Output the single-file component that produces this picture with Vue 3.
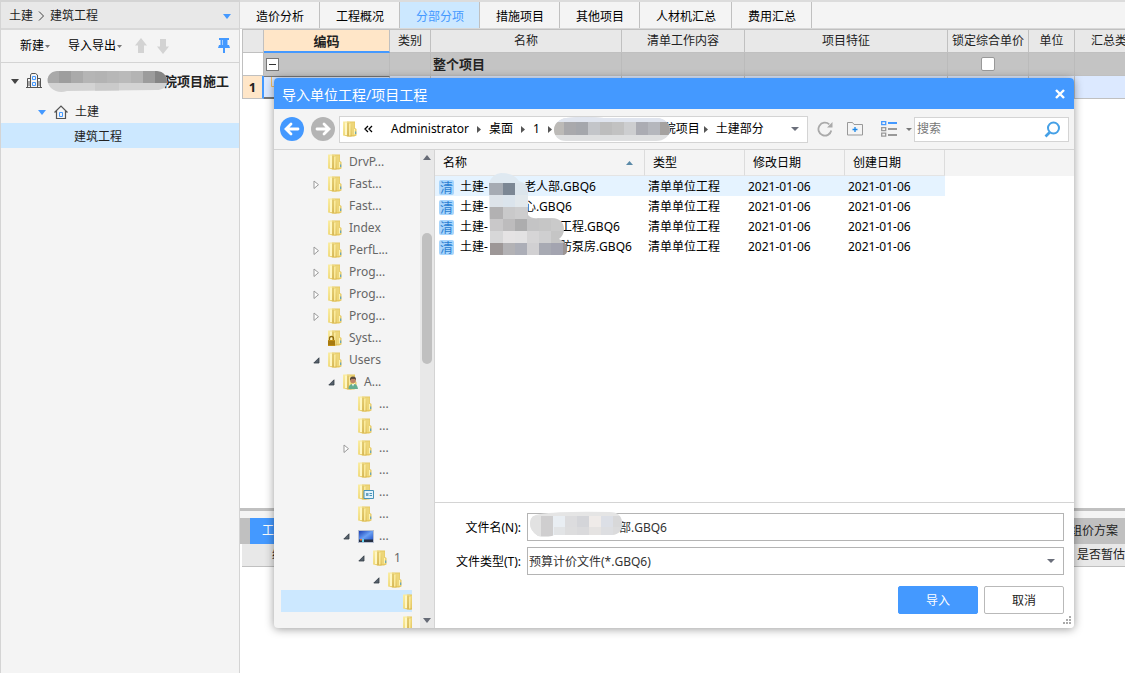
<script setup>
import { ref } from 'vue'

const tabs = ['造价分析', '工程概况', '分部分项', '措施项目', '其他项目', '人材机汇总', '费用汇总']
const activeTab = ref('分部分项')
const columns = ['类别', '名称', '清单工作内容', '项目特征', '锁定综合单价', '单位', '汇总类别']

const folders = [
  { level: 0, label: 'DrvP...' },
  { level: 0, label: 'Fast...', arrow: 'closed' },
  { level: 0, label: 'Fast...' },
  { level: 0, label: 'Index' },
  { level: 0, label: 'PerfL...', arrow: 'closed' },
  { level: 0, label: 'Prog...', arrow: 'closed' },
  { level: 0, label: 'Prog...', arrow: 'closed' },
  { level: 0, label: 'Prog...', arrow: 'closed' },
  { level: 0, label: 'Syst...', badge: 'lock' },
  { level: 0, label: 'Users', arrow: 'open' },
  { level: 1, label: 'A...', arrow: 'open', badge: 'user' },
  { level: 2, label: '...' },
  { level: 2, label: '...' },
  { level: 2, label: '...', arrow: 'closed' },
  { level: 2, label: '...' },
  { level: 2, label: '...', badge: 'card' },
  { level: 2, label: '...' },
  { level: 2, label: '...', arrow: 'open', badge: 'desktop' },
  { level: 3, label: '1', arrow: 'open' },
  { level: 4, label: '', arrow: 'open' },
  { level: 5, label: '', selected: true },
  { level: 5, label: '' }
]

const files = [
  { hidden: 3, tail: '老人部.GBQ6', selected: true },
  { hidden: 3, tail: '心.GBQ6' },
  { hidden: 6, tail: '工程.GBQ6' },
  { hidden: 6, tail: '防泵房.GBQ6' }
]

const fileName = ref('部.GBQ6')
const fileType = ref('gbq6')
const keyword = ref('')

const projectMask = ['#a9a9a9', '#9e9e9e', '#aaaaaa', '#b5b5b5', '#b3b3b3', '#b7b7b7', '#bababa', '#b4b4b4', '#9c9c9c', '#858585']
const pathMask = ['#bcbab7', '#a9a9ac', '#a5a7ac', '#c3c5c9', '#bdbdbd', '#c2c2c2', '#cdced0', '#abacb3', '#b5b7bd', '#a5a2a0']
const nameMask = ['#e2e2e2', '#cfcecf', '#e9eef3', '#dcdcde', '#d4d5d9', '#efebe9', '#dcdfe6', '#d8d8d9']
const listMask = [
  ['#dfe9f1', '#dfe9f1', '#dfe9f1', '#dfe9f1', '#dfe9f1', '#dfe9f1', '#dfe9f1'],
  ['#a6abb3', '#7c8794', '#dce5ec', '#dce5ec', '#dce5ec', '#dce5ec', '#dce5ec'],
  ['#dde3e9', '#dbe4ec', '#e2e8ec', '#e2e8ec', '#dcdcdc', '#dcdcdc', '#dcdcdc'],
  ['#b2b1b2', '#c9c9ca', '#cdcdce', '#c9c9ca', '#cccccc', '#cccccc', '#cccccc'],
  ['#c9c8c9', '#bdbcbd', '#adadae', '#c4c4c5', '#c6c6c6', '#cacaca', '#cccccc'],
  ['#d7d7d8', '#e5e3e4', '#e3e2e3', '#d6d5d6', '#cfcfd0', '#c5c5c5', '#c2c2c2'],
  ['#9d9797', '#b3b2b5', '#acaeb7', '#d1d0d2', '#a8aab3', '#a3a4b0', '#9a9493']
]
</script>

<template>
  <div class="app">
    <svg class="defs" width="0" height="0" aria-hidden="true">
      <defs>
        <linearGradient id="gold" x1="0" x2="1" y1="0" y2="1">
          <stop offset="0" stop-color="#fbeea6" /><stop offset="0.5" stop-color="#f1dc80" /><stop offset="1" stop-color="#d9b64c" />
        </linearGradient>
        <linearGradient id="screen" x1="0" x2="1" y1="0" y2="1">
          <stop offset="0" stop-color="#1b3fb4" /><stop offset="0.5" stop-color="#6aa0f4" /><stop offset="1" stop-color="#1d4ec6" />
        </linearGradient>
        <symbol id="folder" viewBox="0 0 14 16">
          <path d="M4 .500h8V7l1.500 1v6.500L11 15.500H4z" fill="#e6c860" />
          <path d="M8 1.500h3.500v12.500H8z" fill="#edd67a" />
          <path d="M0 .500h5l3.500 1.500v13.500H5L0 14.500z" fill="url(#gold)" />
          <path d="M2 1.500h2v12.500H2z" fill="#fff7c4" />
          <path d="M5 1.500v13.500" stroke="#c8a647" stroke-width=".8" />
          <path d="M6 3h1.500v11.500H6z" fill="#fbeb9e" />
          <path d="M11 8h1.200v5.500H11z" fill="#fdf3b4" /><path d="M12.200 10.500h1V13h-1z" fill="#4d9cc8" />
        </symbol>
      </defs>
    </svg>

    <aside class="sidebar">
      <nav class="crumbs" aria-label="位置">
        <span>土建</span>
        <svg width="7" height="12" viewBox="0 0 7 12"><path d="M1 1.500 5.500 6 1 10.500" fill="none" stroke="#444" /></svg>
        <span>建筑工程</span>
        <button class="plain end" aria-label="展开位置"><svg width="8" height="5"><path d="M0 0h8L4 5z" fill="#49f" /></svg></button>
      </nav>
      <div class="tools">
        <button class="plain">新建<svg width="5" height="3"><path d="M0 0h5L2.500 3z" fill="#777" /></svg></button>
        <button class="plain gap-l">导入导出<svg width="5" height="3"><path d="M0 0h5L2.500 3z" fill="#777" /></svg></button>
        <button class="plain gap-m" aria-label="上移"><svg width="12" height="16"><path d="M6 0l6 7.500H9V15H3V7.500H0z" fill="#d3d3d3" /></svg></button>
        <button class="plain gap-s" aria-label="下移"><svg width="12" height="16"><path d="M6 16l6-7.500H9V1H3v7.500H0z" fill="#d3d3d3" /></svg></button>
        <button class="plain end" aria-label="固定"><svg width="12" height="16"><path d="M1 0h10v2H9.500v5H11l1 3H7v5H5v-5H0l1-3h1.500V2H1z" fill="#49f" /><path d="M4 2h1v5H4z" fill="#a7cfff" /></svg></button>
      </div>
      <ul class="project">
        <li class="root">
          <svg class="caret" width="8" height="5"><path d="M0 0h8L4 5z" fill="#444" /></svg>
          <svg class="building" width="16" height="16" fill="none" stroke="#555"><path d="M0 14.500h16M1.500 14.500v-9h3M4.500 14.500V2l1-1.500h4L11.500 2v12.500M11.500 5.500h3v9M3 8v5M13 8v5" /><path d="M6.500 3.500h3v3h-3zM6.500 9.500h3v3h-3z" stroke="#49f" /></svg>
          <svg class="mask" width="120" height="24">
            <clipPath id="maskA"><path d="M10 2h100q10 1 10 11c0 6-6 8-10 8L20 22q-9 3-16-3c-6-6-4-16 6-17z" /></clipPath>
            <g clip-path="url(#maskA)">
              <rect width="120" height="24" fill="#d3d3d3" /><rect x="48" y="14" width="24" height="10" fill="#cacaca" />
              <rect v-for="(c, i) in projectMask" :key="i" :x="i * 12" y="2" width="12" height="12" :fill="c" />
            </g>
          </svg>
          <b>院项目施工</b>
        </li>
        <li class="branch">
          <svg class="caret" width="8" height="5"><path d="M0 0h8L4 5z" fill="#49f" /></svg>
          <svg class="house" width="14" height="14" fill="none" stroke="#555"><path d="M.5 7.500 7 1l6.500 6.500M2.500 6v7.500h9V6" stroke-width="1.200" /><path d="M5.500 7.500h3v4h-3z" stroke="#49f" /></svg>
          <span>土建</span>
        </li>
        <li class="leaf">建筑工程</li>
      </ul>
    </aside>

    <main class="main">
      <nav class="tabs" aria-label="页签">
        <button v-for="t in tabs" :key="t" :class="{ active: t === activeTab }" @click="activeTab = t">{{ t }}</button>
      </nav>
      <div class="sheet">
        <table class="grid">
          <colgroup><col class="c-no"><col class="c-code"><col class="c-kind"><col class="c-name"><col class="c-work"><col><col class="c-lock"><col class="c-unit"><col class="c-sum"></colgroup>
          <thead>
            <tr><th></th><th class="code">编码</th><th v-for="c in columns" :key="c">{{ c }}</th></tr>
          </thead>
          <tbody>
            <tr class="total">
              <td class="blank"></td>
              <td class="fold"><button aria-label="折叠"></button></td><td></td><td><b>整个项目</b></td><td></td><td></td>
              <td class="center"><input type="checkbox" aria-label="锁定综合单价"></td><td></td><td></td>
            </tr>
            <tr class="current"><td class="no">1</td><td class="cell"><svg width="10" height="12"><path d="M7.500 0v9.500H10" fill="none" stroke="#f5c067" /></svg></td><td v-for="n in 7" :key="n"></td></tr>
          </tbody>
        </table>
      </div>
      <section class="detail">
        <div class="detail-tabs"><button class="on">工料机显示</button><button class="last">组价方案</button></div>
        <div class="detail-head"><span>编码</span><span>是否暂估</span></div>
      </section>
    </main>

    <section class="dialog" role="dialog" aria-labelledby="dlg-title">
      <header class="title">
        <h1 id="dlg-title">导入单位工程/项目工程</h1>
        <button class="plain" aria-label="关闭"><svg width="10" height="10"><path d="M1 1l8 8M9 1 1 9" stroke="#fff" stroke-width="2.400" /></svg></button>
      </header>
      <div class="bar">
        <button class="plain" aria-label="后退"><svg width="24" height="24" fill="none" stroke="#fff" stroke-width="2.800"><circle cx="12" cy="12" r="12" fill="#49f" stroke="none" /><path d="M18 12H6.500M11 7l-5 5 5 5" stroke-linecap="round" /></svg></button>
        <button class="plain forward" aria-label="前进"><svg width="24" height="24" fill="none" stroke="#fff" stroke-width="2.800"><circle cx="12" cy="12" r="12" fill="#b4b4b4" stroke="none" /><path d="M6 12h11.500M13 7l5 5-5 5" stroke-linecap="round" /></svg></button>
        <div class="path">
          <svg width="14" height="16"><use href="#folder" /></svg>
          <button class="plain more" aria-label="上级目录"><svg width="9" height="8" fill="none" stroke="#000" stroke-width="1.300"><path d="M4 1 1 4l3 3M8 1 5 4l3 3" /></svg></button>
          <button class="plain">Administrator</button><svg class="sep" width="4" height="7"><path d="M0 0l4 3.500L0 7z" fill="#555" /></svg>
          <button class="plain">桌面</button><svg class="sep" width="4" height="7"><path d="M0 0l4 3.500L0 7z" fill="#555" /></svg>
          <button class="plain">1</button><svg class="sep" width="4" height="7"><path d="M0 0l4 3.500L0 7z" fill="#555" /></svg>
          <svg class="mask path-mask" width="116" height="26">
            <clipPath id="maskB"><path d="M12 1Q30-1 50 1h52c9 0 14 6 14 12s-6 11-14 11H14C5 25 0 19 0 13S5 2 12 1z" /></clipPath>
            <g clip-path="url(#maskB)">
              <rect width="116" height="26" fill="#dedfe0" /><rect width="116" height="6" fill="#e0e5ef" />
              <rect v-for="(c, i) in pathMask" :key="i" :x="i * 12 - 2" y="5" width="12" height="13" :fill="c" />
            </g>
          </svg>
          <button class="plain tail">院项目</button><svg class="sep close" width="4" height="7"><path d="M0 0l4 3.500L0 7z" fill="#555" /></svg>
          <button class="plain">土建部分</button>
          <button class="plain end" aria-label="历史路径"><svg width="8" height="4"><path d="M0 0h8L4 4z" fill="#6b6f7b" /></svg></button>
        </div>
        <button class="plain refresh" aria-label="刷新"><svg width="16" height="16"><path d="M14.300 9.500A6.500 6.500 0 1 1 12.300 3.300" fill="none" stroke="#aaa" stroke-width="1.800" /><path d="M15.500 1v5.500H10z" fill="#aaa" /></svg></button>
        <button class="plain new" aria-label="新建文件夹"><svg width="16" height="14" fill="none"><path d="M.5 13V.5h5l1.500 2h8.500v10.500H.5" stroke="#999" /><path d="M8 5v5M5.500 7.500h5" stroke="#1a86e8" stroke-width="1.300" /></svg></button>
        <button class="plain view" aria-label="视图"><svg width="17" height="16" fill="none"><path d="M.7.700h4v3h-4z" stroke="#49f" stroke-width="1.300" /><path d="M7 2h9" stroke="#49f" stroke-width="2" /><path d="M.7 6.700h4v3h-4zM.7 12.200h4v3h-4z" stroke="#999" stroke-width="1.300" /><path d="M7 8h9M7 14h9" stroke="#999" stroke-width="2" /></svg></button>
        <button class="plain view-more" aria-label="更多视图"><svg width="6" height="3"><path d="M0 0h6L3 3z" fill="#777" /></svg></button>
        <label class="search">
          <input v-model="keyword" type="text" placeholder="搜索" aria-label="搜索">
          <svg width="17" height="17" fill="none" stroke="#45a0e6"><circle cx="9.500" cy="7" r="5.500" stroke-width="2" /><path d="M5.500 11.500 1.500 15.500" stroke-width="2.600" /></svg>
        </label>
      </div>
      <div class="content">
        <div class="tree">
          <ul>
            <li v-for="(f, i) in folders" :key="i" :class="['lv' + f.level, { selected: f.selected }]">
              <span class="twist">
                <svg v-if="f.arrow === 'closed'" width="7" height="9"><path d="M1 1v7.500L5.500 4.700z" fill="#fff" stroke="#999" /></svg>
                <svg v-else-if="f.arrow === 'open'" width="7" height="7"><path d="M6 .8V6H.8z" fill="#56616c" stroke="#333c45" stroke-width=".8" /></svg>
              </span>
              <span class="icon">
                <svg v-if="f.badge === 'desktop'" width="16" height="13"><rect width="16" height="13" fill="#b7bfd0" /><rect x="1" y="1" width="14" height="10" fill="url(#screen)" /><path d="M1 9.500h14V12H1z" fill="#252f42" /><path d="M2 9h2v1.500H2z" fill="#e77039" /><path d="M4 9h2v3H4z" fill="#5fd1ef" /></svg>
                <svg v-else width="16" height="16">
                  <use href="#folder" width="14" height="16" />
                  <g v-if="f.badge === 'lock'"><path d="M1.500 10V8.500a2 2 0 0 1 4 0V10" fill="none" stroke="#8e6b10" stroke-width="1.300" /><path d="M0 10h7v6H0z" fill="#c38f13" /><path d="M0 12h7M0 14h7" stroke="#7c5a0c" stroke-width=".8" /></g>
                  <g v-if="f.badge === 'user'"><path d="M5.500 15q0-5 4.500-5t5 5z" fill="#65ad91" /><circle cx="10" cy="6.500" r="2.800" fill="#c08468" /><path d="M7 6.500q-.5-4 3-4t3 4L12 5H8.500z" fill="#5b4a3d" /><path d="M9 10h2l-1 2.500z" fill="#fff" /></g>
                  <g v-if="f.badge === 'card'"><path d="M6 6.500h9.500v8H6z" fill="#e3f3fc" stroke="#4893b8" /><path d="M8 9h2.500v3H8z" fill="#69a1bf" /><path d="M11.500 9.500H14M11.500 11.500H14" stroke="#4893b8" /></g>
                </svg>
              </span>
              <span>{{ f.label }}</span>
            </li>
          </ul>
        </div>
        <div class="scroll" aria-hidden="true">
          <svg width="8" height="5"><path d="M0 5h8L4 0z" fill="#666b76" /></svg>
          <span class="track"><i></i></span>
          <svg width="8" height="5"><path d="M0 0h8L4 5z" fill="#666b76" /></svg>
        </div>
        <div class="pane">
          <div class="list">
            <table>
              <colgroup><col class="f-name"><col class="f-col"><col class="f-col"><col class="f-col"><col></colgroup>
              <thead>
                <tr><th><span class="sorted">名称<svg width="7" height="4"><path d="M0 4h7L3.500 0z" fill="#5b8aa8" /></svg></span></th><th>类型</th><th>修改日期</th><th>创建日期</th><th></th></tr>
              </thead>
              <tbody>
                <tr v-for="(f, i) in files" :key="i" :class="{ selected: f.selected }">
                  <td><span class="file"><i>清</i>土建-<span :style="{ width: f.hidden * 12 + 'px' }"></span>{{ f.tail }}</span></td>
                  <td>清单单位工程</td><td>2021-01-06</td><td>2021-01-06</td><td></td>
                </tr>
              </tbody>
            </table>
            <svg class="mask list-mask" width="80" height="84">
              <clipPath id="maskC"><path d="M0 10Q3 1 12 0q13 0 18 8 9 2 9 10v24q4 4 10 3h14c8 0 12 5 12 11q0 6-5 10 6 3 8 7v6q-1 3-6 4H1V60z" /></clipPath>
              <g clip-path="url(#maskC)">
                <g v-for="(row, r) in listMask" :key="r"><rect v-for="(c, i) in row" :key="i" :x="i * 12 + (i ? 2 : 0)" :y="r * 12 - 2" :width="i ? 12 : 14" height="12" :fill="c" /></g>
              </g>
            </svg>
          </div>
          <form class="form" @submit.prevent>
            <label for="fname">文件名(N):</label>
            <div class="field">
              <input id="fname" v-model="fileName" type="text">
              <svg class="mask name-mask" width="92" height="26">
                <clipPath id="maskD"><path d="M10 3Q30 0 80 1q12 0 12 12 0 10-10 11H24q-8 4-16 1Q0 20 0 12T10 3z" /></clipPath>
                <g clip-path="url(#maskD)"><rect width="94" height="26" fill="#e5e5e5" /><rect v-for="(c, i) in nameMask" :key="i" :x="i * 12 - 1" y="5" width="12" height="20" :fill="c" /><path d="M24 16h70v9H24z" fill="#dedede" fill-opacity=".6" /></g>
              </svg>
            </div>
            <label for="ftype">文件类型(T):</label>
            <div class="field">
              <select id="ftype" v-model="fileType"><option value="gbq6">预算计价文件(*.GBQ6)</option></select>
              <svg class="drop" width="8" height="4"><path d="M0 0h8L4 4z" fill="#6b6f7b" /></svg>
            </div>
            <div class="actions"><button class="primary" type="submit">导入</button><button type="button">取消</button></div>
          </form>
          <svg class="grip" width="8" height="8" fill="#aaa" aria-hidden="true"><path d="M6 0h2v2H6zM3 3h2v2H3zM6 3h2v2H6zM0 6h2v2H0zM3 6h2v2H3zM6 6h2v2H6z" /></svg>
        </div>
      </div>
    </section>
  </div>
</template>

<style>
body { overflow: hidden; }
</style>

<style scoped>
.app { position: relative; display: flex; min-height: 100vh; overflow: hidden; background: #fff; color: #222; font: 12px/20px "Noto Sans", "Noto Sans CJK SC", sans-serif; }
.app * { box-sizing: border-box; }
.defs, .mask, .drop, .grip { position: absolute; }
svg { display: block; flex: none; }
button, input, select { margin: 0; font: inherit; color: inherit; }
button { padding: 0; border: 0; cursor: pointer; white-space: nowrap; }
ul { margin: 0; padding: 0; list-style: none; }
i { font-style: normal; }
.plain { display: flex; flex: none; align-items: center; background: none; }
.end { margin-left: auto; }

.sidebar { flex: none; width: 240px; background: #f4f4f4; border: solid #d4d4d4; border-width: 2px 1px 0; }
.crumbs { display: flex; align-items: center; gap: 5px; height: 28px; padding: 2px 8px 0; background: #e8e8e8; border-bottom: 2px solid #d8d8d8; }
.tools { display: flex; align-items: center; height: 33px; padding: 0 9px 0 19px; border-bottom: 1px solid #d4d4d4; color: #000; }
.tools svg { margin-left: 1px; }
.gap-l { margin-left: 18px; }
.gap-m { margin-left: 12px; }
.gap-s { margin-left: 9px; }
.project li { display: flex; align-items: center; height: 25px; padding-top: 2px; }
.project .root { position: relative; height: 36px; padding: 0 0 0 10px; }
.building { margin-left: 7px; }
.root b { margin-left: 122px; font-size: 13px; white-space: nowrap; }
.root .mask { left: 46px; top: 6px; }
.project .branch { height: 24px; padding-left: 37px; }
.house { margin: 0 7px 0 8px; }
.project .leaf { padding-left: 73px; background: #cce8ff; }

.main { display: flex; flex: 1; flex-direction: column; min-width: 0; overflow: hidden; }
.tabs { display: flex; height: 29px; background: #f4f4f4; border-top: 2px solid #dcdcdc; border-bottom: 1px solid #d8d8d8; color: #000; }
.tabs button { min-width: 80px; padding: 3px 15px 0 16px; background: none; border-right: 1px solid #c0c0c0; }
.tabs .active { background: #cce8ff; color: #49f; }
.sheet { flex: 1; padding-left: 2px; }
.grid { width: calc(100% + 31px); table-layout: fixed; border-collapse: separate; border-spacing: 0; border-top: 1px solid #c0c0c0; border-left: 1px solid #c0c0c0; }
.c-no { width: 21px; } .c-code { width: 126px; } .c-kind { width: 41px; } .c-name { width: 191px; } .c-work { width: 123px; } .c-lock { width: 81px; } .c-unit { width: 46px; } .c-sum { width: 81px; }
.grid th, .grid td { height: 23px; padding: 0; border-right: 1px solid #c0c0c0; border-bottom: 1px solid #c0c0c0; white-space: nowrap; overflow: hidden; line-height: 20px; }
.grid th { background: #e8e8e8; font-weight: normal; }
.grid th.code { background: #ffe6c8; border-bottom: 2px solid #49f; font-size: 13px; font-weight: bold; }
.total td { background: #c4c4c4; border-right-color: #bbb; }
.grid .total .blank { background: #fff; }
.total b { padding-left: 2px; font-size: 13px; }
.fold button { display: block; width: 13px; height: 13px; margin-left: 2px; background: linear-gradient(#333, #333) center / 7px 1px no-repeat #fff; border: 1px solid #777; }
.center { text-align: center; }
.center input { display: block; width: 14px; height: 14px; margin: 0 auto; appearance: none; background: #fff; border: 1px solid #999; border-radius: 2px; }
.current td { background: #dce9ff; }
.grid .no { background: #ffe6c8; border-right: 2px solid #49f; font-weight: bold; font-size: 13px; text-align: center; }
.grid .cell { border-top: 1px solid #777; border-bottom: 2px solid #777; vertical-align: top; }
.detail { min-height: 165px; border-top: 3px solid #c0c0c0; }
.detail-tabs { display: flex; justify-content: space-between; height: 33px; padding: 7px 0 0 10px; background: linear-gradient(#f4f4f4 7px, #c0c0c0 7px); }
.detail-tabs button { padding: 0 12px; background: none; }
.detail-tabs .on { background: #49f; color: #fff; }
.detail-tabs .last { padding-right: 7px; }
.detail-head { display: flex; align-items: center; justify-content: space-between; height: 23px; margin-left: 2px; padding-left: 30px; background: #e8e8e8; border-bottom: 1px solid #c0c0c0; }

.dialog { position: absolute; inset: 78px 51px 45px 274px; display: flex; flex-direction: column; background: #f4f4f4; border-radius: 4px; box-shadow: 0 1px 10px rgba(0, 0, 0, .4); overflow: hidden; }
.title { display: flex; align-items: center; justify-content: space-between; height: 31px; padding: 0 9px 0 8px; background: #49f; color: #fff; }
.title h1 { margin: 0; padding-top: 2px; font-size: 14px; font-weight: normal; }
.bar { display: flex; align-items: center; height: 41px; padding: 0 5px 0 6px; border-bottom: 1px solid #d4d4d4; color: #000; }
.forward { margin-left: 7px; }
.path { position: relative; display: flex; flex: 1; align-items: center; min-width: 0; height: 27px; margin-left: 4px; padding: 0 8px 0 3px; background: #fff; border: 1px solid #d4d4d4; }
.path .more { margin: 0 18px 0 7px; }
.sep { margin: 0 8px; }
.sep.close { margin-left: 4px; }
.path .tail { margin-left: 104px; }
.path-mask { left: 214px; top: 0; }
.refresh { margin-left: 9px; }
.new { margin-left: 14px; }
.view { margin-left: 18px; }
.view-more { margin-left: 8px; }
.search { display: flex; align-items: center; width: 155px; height: 25px; margin-left: 2px; padding: 0 7px 0 2px; background: #fff; border: 1px solid #d4d4d4; }
.search input { flex: 1; min-width: 0; padding: 0; border: 0; outline: 0; background: none; }
.search input::placeholder { color: #777; opacity: 1; }

.content { display: flex; flex: 1; min-height: 0; }
.tree { width: 146px; padding: 0 8px 0 7px; overflow: hidden; color: #666; }
.tree ul { overflow: hidden; }
.tree li { display: flex; align-items: center; height: 22px; padding-top: 2px; white-space: nowrap; }
.tree .selected { background: #cce8ff; }
.twist { flex: none; width: 15px; }
.icon { flex: none; width: 21px; }
.lv0 { padding-left: 32px; } .lv1 { padding-left: 47px; } .lv2 { padding-left: 62px; } .lv3 { padding-left: 77px; } .lv4 { padding-left: 92px; } .lv5 { padding-left: 107px; }
.scroll { display: flex; flex-direction: column; align-items: center; width: 15px; padding: 5px 1px 5px 0; background: #e8e8e8; border-right: 1px solid #d4d4d4; }
.track { display: flex; flex: 1; width: 10px; padding: 73px 0 0; }
.track i { width: 10px; height: 131px; background: #c0c0c0; border-radius: 5px; }
.pane { position: relative; display: flex; flex: 1; flex-direction: column; min-width: 0; background: #fff; color: #000; }
.list { position: relative; flex: 1; }
.list table { width: 100%; table-layout: fixed; border-spacing: 0; }
.f-name { width: 210px; } .f-col { width: 100px; }
.list th { height: 26px; padding: 0 8px; background: #f4f4f4; border-right: 1px solid #dcdcdc; border-bottom: 1px solid #e4e4e4; font-weight: normal; text-align: left; }
.list th:last-child { border-color: #f4f4f4; }
.sorted { display: flex; align-items: center; justify-content: space-between; padding-right: 3px; }
.list td { height: 20px; padding: 2px 3px 0; line-height: 18px; white-space: nowrap; }
.list .selected td:not(:last-child) { background: #e5f3ff; }
.file { display: flex; align-items: center; }
.file span { flex: none; }
.file i { width: 15px; height: 15px; margin: 0 6px 0 1px; background: #a8d5fc; color: #2a80d2; font-size: 13px; line-height: 14px; text-align: center; border-radius: 2px; }
.list-mask { left: 54px; top: 23px; }
.form { display: grid; grid-template-columns: 86px 1fr; gap: 6px; align-items: center; padding: 10px 10px 14px 0; border-top: 1px solid #d4d4d4; }
.form label { padding-top: 2px; text-align: right; white-space: nowrap; }
.field { position: relative; height: 28px; color: #333; }
.field input, .field select { display: block; width: 100%; height: 28px; padding: 0 2px; background: #fff; border: 1px solid #b4b4b4; border-radius: 0; appearance: none; outline: 0; }
.field select { padding: 2px 0 0 1px; }
.field input { padding-left: 91px; }
.name-mask { left: 3px; top: -2px; }
.drop { right: 9px; top: 12px; }
.actions { display: flex; grid-column: 1 / -1; justify-content: flex-end; gap: 6px; padding-top: 5px; }
.actions button { width: 80px; height: 28px; padding-top: 2px; background: #fff; border: 1px solid #b9b9b9; border-radius: 2px; color: #222; }
.actions .primary { background: #49f; border-color: #49f; color: #fff; }
.grip { right: 3px; bottom: 4px; }
</style>
